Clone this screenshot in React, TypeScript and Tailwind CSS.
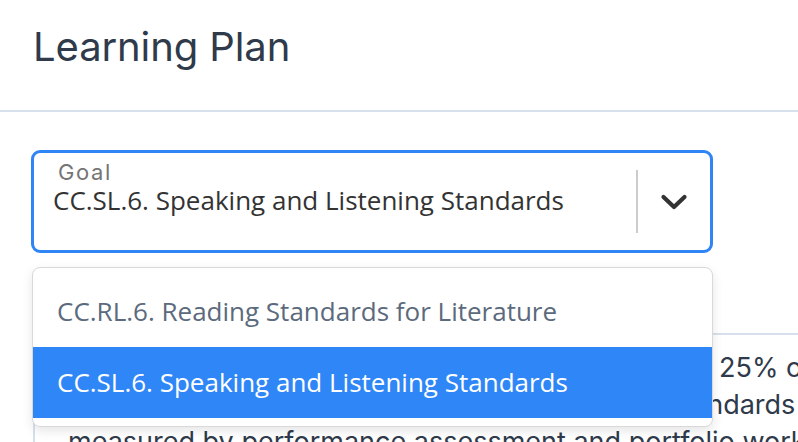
import React, { useState } from 'react';

const goals = [
  'CC.RL.6. Reading Standards for Literature',
  'CC.SL.6. Speaking and Listening Standards',
];

const Chevron = () => (
  <svg width="28" height="18" viewBox="0 0 28 18" fill="none">
    <polyline
      points="3.5,4 14,14 24.5,4"
      stroke="#333333"
      strokeWidth="4.2"
      strokeLinecap="round"
      strokeLinejoin="round"
    />
  </svg>
);

const App = () => {
  const [selected, setSelected] = useState(1);

  return (
    <div className="w-[798px] h-[442px] overflow-hidden bg-white">
      <div className="h-[112px] border-b-2 border-[#d6e1ed] px-[33px] pt-[23px]">
        <h1 className="text-[40px] leading-[48px] text-[#2f3a4b] font-['Inter',sans-serif] tracking-[-0.1px]">
          Learning Plan
        </h1>
      </div>

      <div className="relative px-[31px] pt-[38px]">
        <div className="flex h-[103px] w-[682px] items-center rounded-[9px] border-[3px] border-[#2f85f6] bg-white">
          <div className="flex flex-1 flex-col self-start pl-[19px] pt-[7px]">
            <span className="pl-[5px] text-[22px] leading-[24px] tracking-[1.6px] text-[#757575] font-['Inter',sans-serif]">Goal</span>
            <span className="text-[26px] leading-[32px] text-[#333333] font-['Open_Sans',sans-serif]">
              {goals[selected]}
            </span>
          </div>
          <div className="h-[63px] w-[2px] bg-[#cccccc]" />
          <div className="flex w-[72px] items-center justify-center">
            <Chevron />
          </div>
        </div>

        <div className="absolute left-[32px] top-[155px] z-10 w-[681px] rounded-[8px] border border-[#d9d9d9] bg-white py-[8px] shadow-[0_4px_11px_rgba(0,0,0,0.1)]">
          {goals.map((g, i) => (
            <div
              key={g}
              onClick={() => setSelected(i)}
              className={`flex h-[71px] items-center pl-[24px] text-[26px] font-['Open_Sans',sans-serif] cursor-pointer ${
                i === selected ? 'bg-[#2f86f7] text-white' : 'text-[#5b6a7d]'
              }`}
            >
              {g}
            </div>
          ))}
        </div>

        <div className="mt-[80px] ml-[2px] w-[900px] border-t-2 border-l-2 border-[#d6e1ed] pl-[33px] pt-[14px] font-['Inter',sans-serif] text-[27px] leading-[37px] text-[#2f3a4b] whitespace-nowrap">
          <div>You complete assignments to show mastery of the 25% of the</div>
          <div>standards for the speaking and listening group standards</div>
          <div>measured by performance assessment and portfolio work over the year.</div>
        </div>
      </div>
    </div>
  );
};

export default App;
